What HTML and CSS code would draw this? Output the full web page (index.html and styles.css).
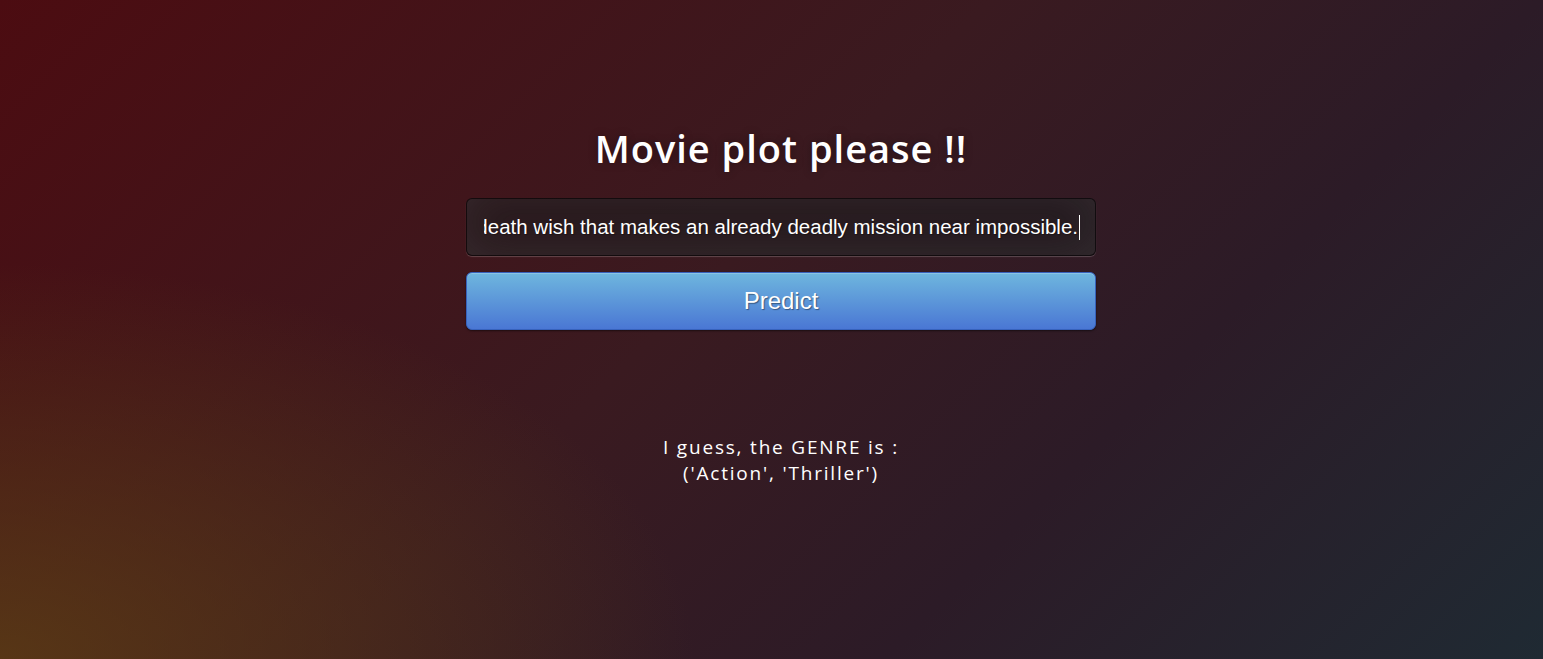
FILE: index.html
```html
<!DOCTYPE html>
<html>
<head>
<meta charset="utf-8">
<title>Movie genre</title>
<link rel="stylesheet" href="styles.css">
</head>
<body>
<main class="page">
  <section class="login">
    <h1 class="title">Movie plot please !!</h1>
    <div class="field">
      <div class="field-clip">
        <span class="field-text">A team of commandos embarks on a dangerous mission, but one member harbors a death wish that makes an already deadly mission near impossible.</span><span class="caret"></span>
      </div>
    </div>
    <button class="btn">Predict</button>
    <div class="result">
      <div>I guess, the GENRE is :</div>
      <div>('Action', 'Thriller')</div>
    </div>
  </section>
</main>
</body>
</html>
```
FILE: styles.css
```css
html, body {
  margin: 0;
  height: 100%;
  overflow: hidden;
}
body {
  font-family: "Open Sans", sans-serif;
  color: #fff;
  font-size: 18px;
  letter-spacing: 1.2px;
  background:
    radial-gradient(ellipse 45% 60% at 0% 100%, rgba(95, 65, 20, 0.75) 0%, rgba(95, 65, 20, 0) 100%),
    linear-gradient(135deg, #4c0c11 0%, #3a1a20 45%, #2c1b27 70%, #1f2a33 100%);
}
.page {
  height: 100%;
  display: flex;
  justify-content: center;
  padding-left: 19px;
  box-sizing: border-box;
}
.login {
  width: 630px;
  display: flex;
  flex-direction: column;
  align-items: stretch;
  padding-top: 120px;
}
.title {
  margin: 0;
  font-size: 38px;
  font-weight: 600;
  letter-spacing: 1px;
  text-align: center;
  line-height: 56px;
  text-shadow: 0 0 10px rgba(0, 0, 0, 0.3);
}
.field {
  margin-top: 22px;
  height: 58px;
  box-sizing: border-box;
  padding: 0 15px 0 17px;
  display: flex;
  align-items: center;
  background: rgba(28, 24, 27, 0.65);
  border: 1px solid rgba(0, 0, 0, 0.5);
  border-radius: 6px;
  box-shadow: inset 0 -5px 45px rgba(100, 100, 100, 0.25), 0 1px 1px rgba(255, 255, 255, 0.2);
  font-family: "Liberation Sans", Arial, sans-serif;
  font-size: 20.5px;
  letter-spacing: 0;
  text-shadow: 1px 1px 1px rgba(0, 0, 0, 0.3);
}
.field-clip {
  flex: 1;
  min-width: 0;
  display: flex;
  align-items: center;
  justify-content: flex-end;
  overflow: hidden;
  white-space: nowrap;
}
.field-text {
  flex: none;
}
.caret {
  flex: none;
  width: 1px;
  height: 25px;
  margin-left: 1px;
  background: #fff;
}
.btn {
  margin-top: 16px;
  height: 58px;
  font-family: "Liberation Sans", Arial, sans-serif;
  font-size: 24px;
  color: #fff;
  letter-spacing: 0;
  background-color: #4a77d4;
  background-image: linear-gradient(to bottom, #6eb6de, #4a77d4);
  border: 1px solid #3762bc;
  border-radius: 6px;
  text-shadow: 1px 1px 1px rgba(0, 0, 0, 0.4);
  box-shadow: inset 0 1px 0 rgba(255, 255, 255, 0.2), 0 1px 2px rgba(0, 0, 0, 0.5);
  padding: 0;
}
.result {
  margin-top: 104px;
  text-align: center;
  font-size: 19px;
  line-height: 26px;
  letter-spacing: 1.8px;
}
```
